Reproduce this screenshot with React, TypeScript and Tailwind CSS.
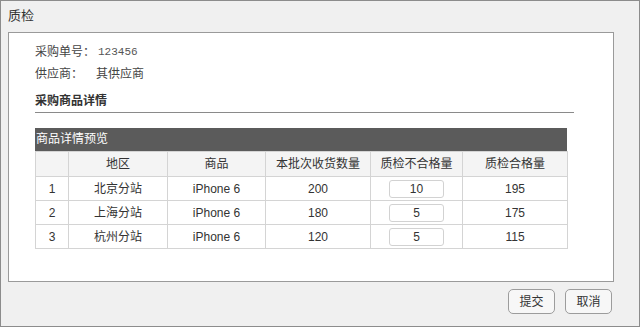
const rows = [
  { id: 1, area: '北京分站', item: 'iPhone 6', qty: 200, bad: '10', good: 195 },
  { id: 2, area: '上海分站', item: 'iPhone 6', qty: 180, bad: '5', good: 175 },
  { id: 3, area: '杭州分站', item: 'iPhone 6', qty: 120, bad: '5', good: 115 },
];

const font = { fontFamily: '"Liberation Sans", "Noto Sans CJK SC", sans-serif' };

const App = () => {
  return (
    <div
      className="w-[640px] h-[327px] bg-[#f0f0f0] border border-[#8c8c8c] flex flex-col text-[#333]"
      style={font}
    >
      <div className="h-[31px] pl-[7px] pt-[6px] text-[13px] leading-[18px] text-[#333]">质检</div>

      <div className="ml-[7px] w-[606px] h-[250px] bg-white border border-[#9a9a9a] pl-[26px] pt-[8px]">
        <div className="flex items-center h-[22px] text-[12px]">
          <span className="w-[63px] text-[#444]">采购单号：</span>
          <span className="text-[11px] text-[#555]" style={{ fontFamily: '"Liberation Mono", monospace' }}>
            123456
          </span>
        </div>
        <div className="flex items-center h-[22px] text-[12px]">
          <span className="w-[61px] text-[#444]">供应商：</span>
          <span className="text-[#444]">其供应商</span>
        </div>
        <div className="mt-[5px] w-[539px] h-[23px] border-b border-[#8a8a8a] text-[12px] font-bold leading-[22px] text-[#333]">
          采购商品详情
        </div>

        <div className="mt-[15px] w-[532px]">
          <div className="h-[23px] bg-[#5b5b5b] text-white text-[12px] leading-[23px] pl-[1px]">商品详情预览</div>
          <table className="w-[532px] border-collapse table-fixed text-[12px] text-center">
            <colgroup>
              <col className="w-[33px]" />
              <col className="w-[99px]" />
              <col className="w-[98px]" />
              <col className="w-[105px]" />
              <col className="w-[92px]" />
              <col className="w-[105px]" />
            </colgroup>
            <thead>
              <tr className="h-[25px] bg-[#f4f4f4]">
                <th className="border border-[#d4d4d4] font-normal"></th>
                <th className="border border-[#d4d4d4] font-normal">地区</th>
                <th className="border border-[#d4d4d4] font-normal">商品</th>
                <th className="border border-[#d4d4d4] font-normal">本批次收货数量</th>
                <th className="border border-[#d4d4d4] font-normal">质检不合格量</th>
                <th className="border border-[#d4d4d4] font-normal">质检合格量</th>
              </tr>
            </thead>
            <tbody>
              {rows.map((r) => (
                <tr key={r.id} className="h-[24px]">
                  <td className="border border-[#d4d4d4]">{r.id}</td>
                  <td className="border border-[#d4d4d4]">{r.area}</td>
                  <td className="border border-[#d4d4d4]">{r.item}</td>
                  <td className="border border-[#d4d4d4]">{r.qty}</td>
                  <td className="border border-[#d4d4d4]">
                    <div className="mx-auto w-[55px] h-[18px] border border-[#d2d2d2] rounded-[3px] leading-[16px]">
                      {r.bad}
                    </div>
                  </td>
                  <td className="border border-[#d4d4d4]">{r.good}</td>
                </tr>
              ))}
            </tbody>
          </table>
        </div>
      </div>

      <div className="flex justify-end gap-[10px] pr-[27px] pt-[7px]">
        <button className="w-[47px] h-[25px] rounded-[5px] border border-[#9c9c9c] bg-[#f7f7f7] text-[12px] text-[#333]">
          提交
        </button>
        <button className="w-[47px] h-[25px] rounded-[5px] border border-[#9c9c9c] bg-[#f7f7f7] text-[12px] text-[#333]">
          取消
        </button>
      </div>
    </div>
  );
};

export default App;
